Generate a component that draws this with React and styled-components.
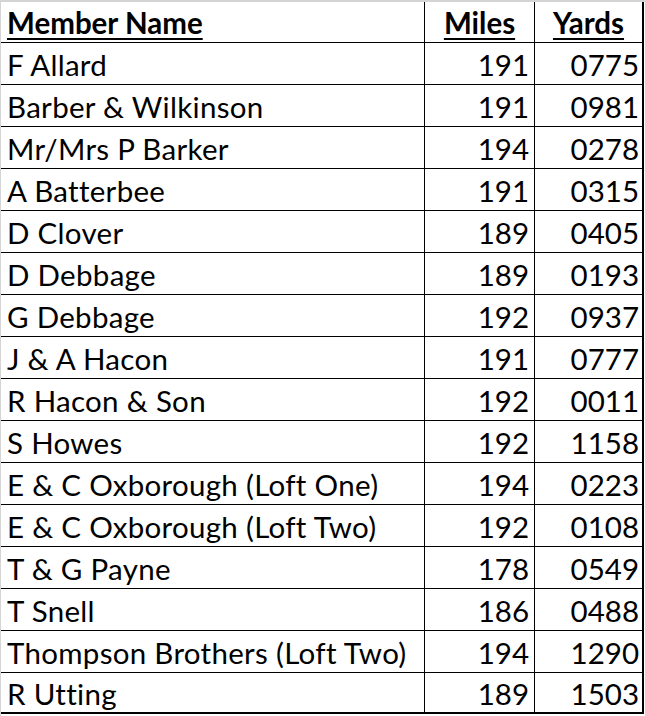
import React from 'react';
import styled, { createGlobalStyle } from 'styled-components';

const GlobalStyle = createGlobalStyle`
  html, body {
    margin: 0;
    padding: 0;
    background: #ffffff;
  }
  body {
    font-family: Lato, "Open Sans", sans-serif;
    color: #000;
  }
`;

const Sheet = styled.div`
  width: 645px;
  height: 716px;
  box-sizing: border-box;
  border-top: 2px solid #d4d4d4;
  border-left: 1px solid #d4d4d4;
  background: #fff;
`;

const Table = styled.div`
  width: 643px;
  display: grid;
  grid-template-columns: 424px 110px 107px;
  border-right: 2px solid #000;
  border-bottom: 2px solid #000;
  box-sizing: border-box;
`;

const Cell = styled.div`
  height: ${(p) => (p.$head ? 41 : p.$last ? 39 : 42)}px;
  border-bottom: ${(p) => (p.$last ? 0 : 1)}px solid #000;
  border-right: ${(p) => (p.$edge ? 0 : 1)}px solid #000;
  display: flex;
  align-items: flex-end;
  justify-content: ${(p) => p.$align || 'flex-start'};
  padding: 0 ${(p) => p.$pr || 0}px ${(p) => (p.$last ? 1 : 2)}px ${(p) => p.$pl || 0}px;
  box-sizing: border-box;
  font-size: 29.5px;
  line-height: 34px;
  letter-spacing: ${(p) => (p.$name ? '0.3px' : '0')};
  white-space: nowrap;
  overflow: hidden;
`;

const HeadText = styled.span`
  font-weight: 700;
  text-decoration: underline;
  text-decoration-thickness: 2px;
  text-underline-offset: 4px;
`;

const members = [
  ['F Allard', '191', '0775'],
  ['Barber & Wilkinson', '191', '0981'],
  ['Mr/Mrs P Barker', '194', '0278'],
  ['A Batterbee', '191', '0315'],
  ['D Clover', '189', '0405'],
  ['D Debbage', '189', '0193'],
  ['G Debbage', '192', '0937'],
  ['J & A Hacon', '191', '0777'],
  ['R Hacon & Son', '192', '0011'],
  ['S Howes', '192', '1158'],
  ['E & C Oxborough (Loft One)', '194', '0223'],
  ['E & C Oxborough (Loft Two)', '192', '0108'],
  ['T & G Payne', '178', '0549'],
  ['T Snell', '186', '0488'],
  ['Thompson Brothers (Loft Two)', '194', '1290'],
  ['R Utting', '189', '1503'],
];

const App = () => {
  return (
    <Sheet>
      <GlobalStyle />
      <Table>
        <Cell $head $pl={6}>
          <HeadText>Member Name</HeadText>
        </Cell>
        <Cell $head $align="center">
          <HeadText>Miles</HeadText>
        </Cell>
        <Cell $head $edge $align="center">
          <HeadText>Yards</HeadText>
        </Cell>
        {members.map((m, i) => {
          const last = i === members.length - 1;
          return (
            <React.Fragment key={i}>
              <Cell $last={last} $name $pl={6}>{m[0]}</Cell>
              <Cell $last={last} $align="flex-end" $pr={5}>{m[1]}</Cell>
              <Cell $last={last} $edge $align="flex-end" $pr={3}>{m[2]}</Cell>
            </React.Fragment>
          );
        })}
      </Table>
    </Sheet>
  );
};

export default App;
